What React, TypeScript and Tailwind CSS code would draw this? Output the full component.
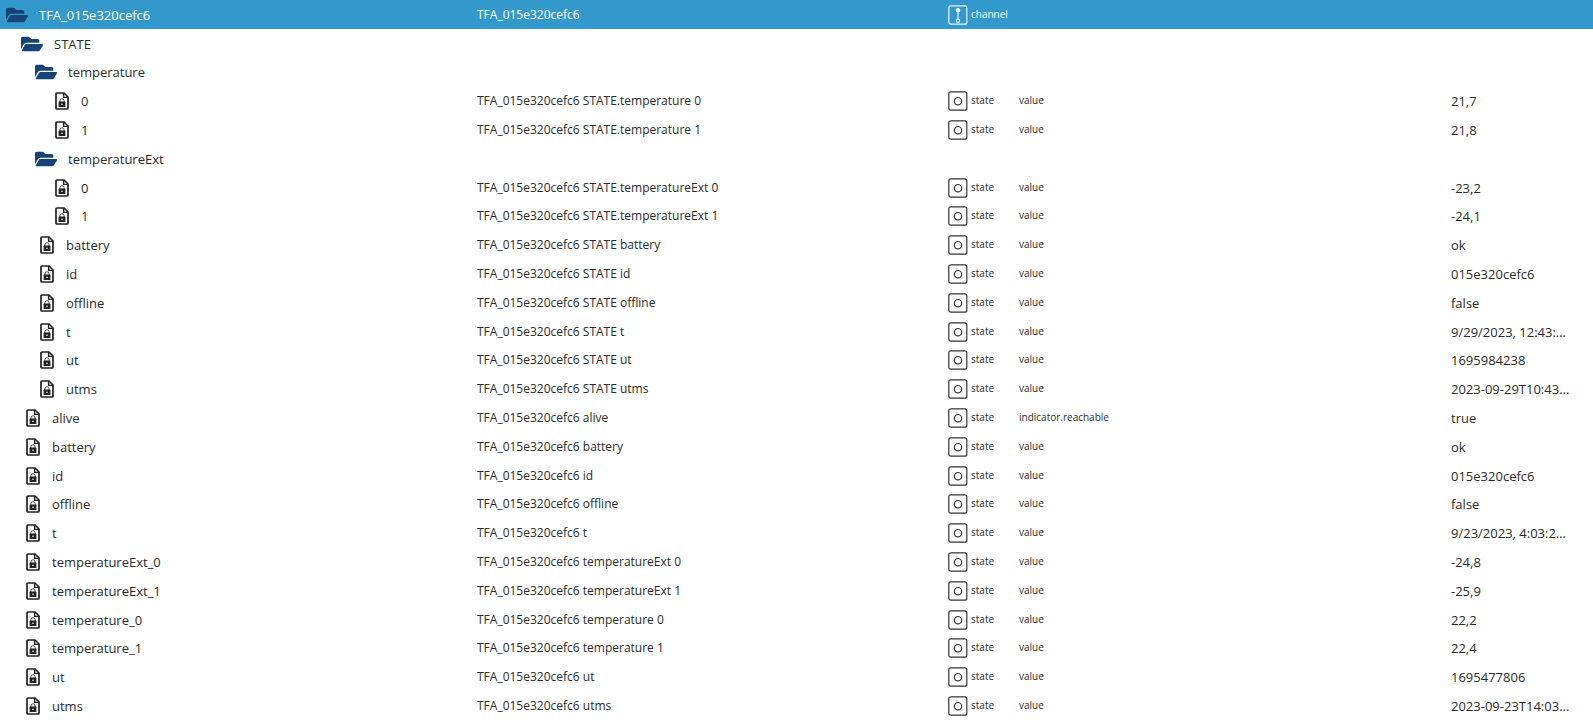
import { useState } from "react";
import { FaFolderOpen } from "react-icons/fa";

type Item = {
    path: string;
    label: string;
    depth: number;
    folder?: boolean;
    name?: string;
    type?: "channel" | "state";
    role?: string;
    value?: string;
};

const device = "TFA_015e320cefc6";

const state = (path: string, label: string, depth: number, name: string, value: string, role = "value"): Item => ({
    path,
    label,
    depth,
    name: `${device} ${name}`,
    type: "state",
    role,
    value,
});

const items: Item[] = [
    { path: "device", label: device, depth: 0, folder: true, name: device, type: "channel" },
    { path: "STATE", label: "STATE", depth: 1, folder: true },
    { path: "STATE.temperature", label: "temperature", depth: 2, folder: true },
    state("STATE.temperature.0", "0", 3, "STATE.temperature 0", "21,7"),
    state("STATE.temperature.1", "1", 3, "STATE.temperature 1", "21,8"),
    { path: "STATE.temperatureExt", label: "temperatureExt", depth: 2, folder: true },
    state("STATE.temperatureExt.0", "0", 3, "STATE.temperatureExt 0", "-23,2"),
    state("STATE.temperatureExt.1", "1", 3, "STATE.temperatureExt 1", "-24,1"),
    state("STATE.battery", "battery", 2, "STATE battery", "ok"),
    state("STATE.id", "id", 2, "STATE id", "015e320cefc6"),
    state("STATE.offline", "offline", 2, "STATE offline", "false"),
    state("STATE.t", "t", 2, "STATE t", "9/29/2023, 12:43:…"),
    state("STATE.ut", "ut", 2, "STATE ut", "1695984238"),
    state("STATE.utms", "utms", 2, "STATE utms", "2023-09-29T10:43…"),
    state("alive", "alive", 1, "alive", "true", "indicator.reachable"),
    state("battery", "battery", 1, "battery", "ok"),
    state("id", "id", 1, "id", "015e320cefc6"),
    state("offline", "offline", 1, "offline", "false"),
    state("t", "t", 1, "t", "9/23/2023, 4:03:2…"),
    state("temperatureExt_0", "temperatureExt_0", 1, "temperatureExt 0", "-24,8"),
    state("temperatureExt_1", "temperatureExt_1", 1, "temperatureExt 1", "-25,9"),
    state("temperature_0", "temperature_0", 1, "temperature 0", "22,2"),
    state("temperature_1", "temperature_1", 1, "temperature 1", "22,4"),
    state("ut", "ut", 1, "ut", "1695477806"),
    state("utms", "utms", 1, "utms", "2023-09-23T14:03…"),
];

const folderIndent = ["pl-[6px]", "pl-[21px]", "pl-[35px]"];
const leafIndent = ["pl-[12px]", "pl-[26px]", "pl-[40px]", "pl-[55px]"];

function FileLockIcon() {
    return (
        <svg viewBox="0 0 14 18" className="h-[18px] w-[14px] shrink-0" fill="none" aria-hidden="true">
            <path d="M2 1H9L13 5V16Q13 17 12 17H2Q1 17 1 16V2Q1 1 2 1Z" stroke="#212121" strokeWidth="1.7" />
            <path d="M8.6 1V5.4H13" stroke="#212121" strokeWidth="1.4" />
            <path d="M4.9 10V8.8a2.1 2.1 0 0 1 4.2 0V10" stroke="#212121" strokeWidth="0.8" />
            <rect x="3.6" y="9.6" width="6.8" height="5.4" rx="0.6" fill="#212121" />
            <circle cx="7" cy="12.3" r="0.8" fill="#fff" />
        </svg>
    );
}

function StateIcon() {
    return (
        <svg viewBox="0 0 20 20" className="size-5 shrink-0" fill="none" stroke="#333" aria-hidden="true">
            <rect x="0.8" y="0.8" width="18" height="18.4" rx="2" strokeWidth="1.2" />
            <circle cx="10" cy="10.2" r="3.7" strokeWidth="1.2" />
        </svg>
    );
}

function ChannelIcon() {
    return (
        <svg viewBox="0 0 20 20" className="size-5 shrink-0" fill="none" stroke="#e6f3fa" aria-hidden="true">
            <rect x="0.8" y="0.8" width="18" height="18.4" rx="2" strokeWidth="1.2" />
            <circle cx="10" cy="5.3" r="2.2" fill="#fff" stroke="none" />
            <path d="M10 3V14" strokeWidth="1.2" />
            <circle cx="10" cy="15.8" r="1.7" strokeWidth="1.1" />
        </svg>
    );
}

export default function App() {
    const [closed, setClosed] = useState<string[]>([]);

    const toggle = (path: string) =>
        setClosed((prev) => (prev.includes(path) ? prev.filter((p) => p !== path) : [...prev, path]));

    const visible = items.filter(
        (item) => !closed.some((p) => (p === "device" ? item.depth > 0 : item.path.startsWith(p + "."))),
    );

    return (
        <table className="w-full table-fixed border-collapse bg-white font-['Open_Sans','Noto_Sans',sans-serif] text-[#2b2b2b]">
            <colgroup>
                <col className="w-[477px]" />
                <col className="w-[471px]" />
                <col className="w-[71px]" />
                <col />
                <col className="w-[142px]" />
            </colgroup>
            <tbody>
                {visible.map((item) => (
                    <tr
                        key={item.path}
                        className={
                            item.type === "channel"
                                ? "h-[29px] bg-[#3399cc] text-white"
                                : "h-[29px] nth-[5n+3]:h-7"
                        }
                    >
                        <td className="p-0 text-[13px] leading-5">
                            {item.folder ? (
                                <button
                                    type="button"
                                    onClick={() => toggle(item.path)}
                                    aria-expanded={!closed.includes(item.path)}
                                    className={`flex items-center gap-[11px] ${folderIndent[item.depth]}`}
                                >
                                    <FaFolderOpen className="h-5 w-[22px] shrink-0 text-[#164477]" />
                                    {item.label}
                                </button>
                            ) : (
                                <div className={`flex items-center gap-3 ${leafIndent[item.depth]}`}>
                                    <FileLockIcon />
                                    {item.label}
                                </div>
                            )}
                        </td>
                        <td className="truncate p-0 text-xs">{item.name}</td>
                        <td className="p-0 text-[10px] leading-[18px]">
                            {item.type && (
                                <div className="flex items-start gap-[3px]">
                                    {item.type === "channel" ? <ChannelIcon /> : <StateIcon />}
                                    {item.type}
                                </div>
                            )}
                        </td>
                        <td className="truncate p-0 pb-0.5 text-[10px] leading-[18px]">{item.role}</td>
                        <td className="truncate p-0 text-[13px] leading-5">{item.value}</td>
                    </tr>
                ))}
            </tbody>
        </table>
    );
}
